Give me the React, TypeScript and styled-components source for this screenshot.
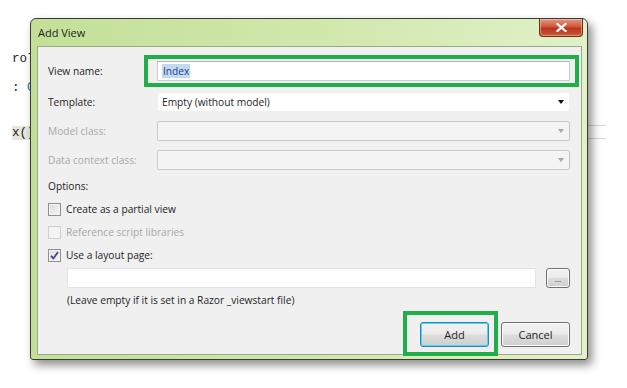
import styled, { createGlobalStyle } from 'styled-components'

const Global = createGlobalStyle`
  html, body { margin: 0; padding: 0; background: #ffffff; }
  body { width: 627px; height: 388px; overflow: hidden; }
`

const uiFont = `"Open Sans", "Noto Sans", "Liberation Sans", sans-serif`

const Desktop = styled.div`
  position: relative;
  width: 627px;
  height: 388px;
  background: #ffffff;
`

const Code = styled.div`
  padding: 52px 0 0 12px;
  font-family: "Liberation Mono", "DejaVu Sans Mono", monospace;
  font-size: 12.5px;
  color: #222;
  display: flex;
  flex-direction: column;
`

const CodeLine = styled.div<{ $top: number }>`
  margin-top: ${p => p.$top}px;
  height: 15px;
  line-height: 15px;
  white-space: pre;
`

const Hl = styled.span`
  background: #e6e6dc;
`

const Blue = styled.span`
  color: #3a6fb0;
`

const EditorLine = styled.div<{ $top: number }>`
  position: absolute;
  left: 588px;
  top: ${p => p.$top}px;
  width: 18px;
  height: 1px;
  background: #d8d8d8;
`

const Window = styled.div`
  position: absolute;
  left: 30px;
  top: 18px;
  width: 558px;
  height: 342px;
  border: 1px solid #3b3b3b;
  border-radius: 6px 6px 3px 3px;
  background: linear-gradient(90deg, #c3df97 0%, #d3e9b0 60%, #e1f1c8 100%);
  box-shadow: 4px 5px 10px rgba(0, 0, 0, 0.45);
  display: flex;
  flex-direction: column;
  padding: 0 5px 4px 6px;
  box-sizing: border-box;
`

const TitleBar = styled.div`
  height: 27px;
  display: flex;
  align-items: center;
  justify-content: space-between;
  font-family: ${uiFont};
  font-size: 11px;
  color: #1e1e1e;
  padding-left: 1px;
`

const CloseButton = styled.div`
  align-self: flex-start;
  width: 44px;
  height: 18px;
  margin-right: -1px;
  border: 1px solid #6b2b1e;
  border-top: none;
  border-radius: 0 0 4px 4px;
  background: linear-gradient(180deg, #e29a85 0%, #d0553a 45%, #b8361e 55%, #c85a38 100%);
  box-shadow: inset 0 0 0 1px rgba(255, 220, 200, 0.45);
  display: flex;
  align-items: center;
  justify-content: center;
  box-sizing: border-box;
`

const Client = styled.div`
  position: relative;
  flex: 1;
  background: #f0f0f0;
  border: 1px solid #9aaa88;
  font-family: ${uiFont};
  font-size: 10.2px;
  color: #1e1e1e;
  padding: 14px 11px 0 10px;
  display: flex;
  flex-direction: column;
`

const FieldRow = styled.div<{ $gap: number }>`
  display: grid;
  grid-template-columns: 109px 1fr;
  align-items: center;
  height: 20px;
  margin-bottom: ${p => p.$gap}px;
`

const Label = styled.span<{ $disabled?: boolean }>`
  color: ${p => (p.$disabled ? '#a8a8a8' : '#1e1e1e')};
`

const TextBox = styled.div`
  height: 20px;
  background: #ffffff;
  border: 1px solid #c5cfd9;
  border-top-color: #abb3bd;
  box-sizing: border-box;
  display: flex;
  align-items: center;
  padding-left: 4px;
`

const Selected = styled.span`
  background: #c3d9f2;
  color: #1f3f8a;
  padding: 0 1px;
`

const Select = styled.div<{ $disabled?: boolean }>`
  height: 20px;
  box-sizing: border-box;
  background: ${p => (p.$disabled ? '#f4f4f4' : '#ffffff')};
  border: 1px solid ${p => (p.$disabled ? '#cacaca' : '#f0f0f0')};
  border-radius: 2px;
  display: flex;
  align-items: center;
  justify-content: space-between;
  padding: 0 4px 0 4px;
`

const Arrow = styled.span<{ $disabled?: boolean }>`
  width: 0;
  height: 0;
  border-left: 3.5px solid transparent;
  border-right: 3.5px solid transparent;
  border-top: 4px solid ${p => (p.$disabled ? '#a8a8a8' : '#111')};
  margin-right: 1px;
`

const SectionLabel = styled.div`
  height: 16px;
  line-height: 16px;
  margin-top: 8px;
`

const CheckRow = styled.label<{ $disabled?: boolean }>`
  display: flex;
  align-items: center;
  gap: 5px;
  height: 16px;
  margin-top: 7px;
  color: ${p => (p.$disabled ? '#a8a8a8' : '#1e1e1e')};
`

const Box = styled.span<{ $disabled?: boolean }>`
  width: 13px;
  height: 13px;
  box-sizing: border-box;
  border: 1px solid ${p => (p.$disabled ? '#cfcfcf' : '#8e8f8f')};
  background: ${p =>
    p.$disabled ? '#f4f4f4' : 'linear-gradient(135deg, #dcdcdc 0%, #f6f6f6 100%)'};
  box-shadow: ${p => (p.$disabled ? 'none' : 'inset 0 0 0 1px #f4f4f4')};
  display: flex;
  align-items: center;
  justify-content: center;
`

const LayoutRow = styled.div`
  display: flex;
  align-items: center;
  gap: 10px;
  margin: 5px 0 0 19px;
`

const PathBox = styled.div`
  flex: 1;
  height: 20px;
  background: #ffffff;
  border: 1px solid #e2e3e4;
  box-sizing: border-box;
`

const Button = styled.div<{ $w: number; $h: number; $focused?: boolean }>`
  width: ${p => p.$w}px;
  height: ${p => p.$h}px;
  box-sizing: border-box;
  border: 1px solid ${p => (p.$focused ? '#3c7fb1' : '#707070')};
  border-radius: 3px;
  background: linear-gradient(180deg, #f2f2f2 0%, #ebebeb 48%, #dddddd 52%, #cfcfcf 100%);
  box-shadow: inset 0 0 0 1px ${p => (p.$focused ? '#48d8fb' : '#fcfcfc')};
  display: flex;
  align-items: center;
  justify-content: center;
  color: #1e1e1e;
  font-size: ${p => (p.$h < 22 ? '8px' : '11px')};
`

const Note = styled.div`
  margin: 4px 0 0 19px;
  height: 17px;
  line-height: 17px;
`

const Footer = styled.div`
  display: flex;
  justify-content: flex-end;
  gap: 12px;
  margin-top: 13px;
`

const Annotation = styled.div<{ $l: number; $t: number; $w: number; $h: number }>`
  position: absolute;
  left: ${p => p.$l}px;
  top: ${p => p.$t}px;
  width: ${p => p.$w}px;
  height: ${p => p.$h}px;
  border: 4px solid #20ae48;
  box-sizing: border-box;
  pointer-events: none;
`

const Check = () => (
  <svg width="9" height="9" viewBox="0 0 9 9">
    <path d="M1 4.8 L3.4 7.4 L8 1" fill="none" stroke="#3a3f9a" strokeWidth="1.7" />
  </svg>
)

const CloseX = () => (
  <svg width="11" height="9" viewBox="0 0 11 9">
    <path d="M1.5 1 L9.5 8 M9.5 1 L1.5 8" stroke="#ffffff" strokeWidth="2.2" strokeLinecap="square" />
  </svg>
)

export default function App() {
  return (
    <>
      <Global />
      <Desktop>
        <Code>
          <CodeLine $top={0}>rol</CodeLine>
          <CodeLine $top={14}>
            : <Blue>C</Blue>
          </CodeLine>
          <CodeLine $top={30}>
            <Hl>x()</Hl>
          </CodeLine>
        </Code>
        <EditorLine $top={125} />
        <EditorLine $top={138} />
        <Window>
          <TitleBar>
            <span>Add View</span>
            <CloseButton>
              <CloseX />
            </CloseButton>
          </TitleBar>
          <Client>
            <FieldRow $gap={11}>
              <Label>View name:</Label>
              <TextBox>
                <Selected>Index</Selected>
              </TextBox>
            </FieldRow>
            <FieldRow $gap={9}>
              <Label>Template:</Label>
              <Select>
                <span>Empty (without model)</span>
                <Arrow />
              </Select>
            </FieldRow>
            <FieldRow $gap={9}>
              <Label $disabled>Model class:</Label>
              <Select $disabled>
                <span />
                <Arrow $disabled />
              </Select>
            </FieldRow>
            <FieldRow $gap={0}>
              <Label $disabled>Data context class:</Label>
              <Select $disabled>
                <span />
                <Arrow $disabled />
              </Select>
            </FieldRow>
            <SectionLabel>Options:</SectionLabel>
            <CheckRow>
              <Box />
              Create as a partial view
            </CheckRow>
            <CheckRow $disabled>
              <Box $disabled />
              Reference script libraries
            </CheckRow>
            <CheckRow>
              <Box>
                <Check />
              </Box>
              Use a layout page:
            </CheckRow>
            <LayoutRow>
              <PathBox />
              <Button $w={24} $h={20}>...</Button>
            </LayoutRow>
            <Note>(Leave empty if it is set in a Razor _viewstart file)</Note>
            <Footer>
              <Button $w={69} $h={25} $focused>Add</Button>
              <Button $w={69} $h={25}>Cancel</Button>
            </Footer>
          </Client>
          <Annotation $l={113} $t={36} $w={435} $h={32} />
          <Annotation $l={372} $t={292} $w={95} $h={45} />
        </Window>
      </Desktop>
    </>
  )
}
